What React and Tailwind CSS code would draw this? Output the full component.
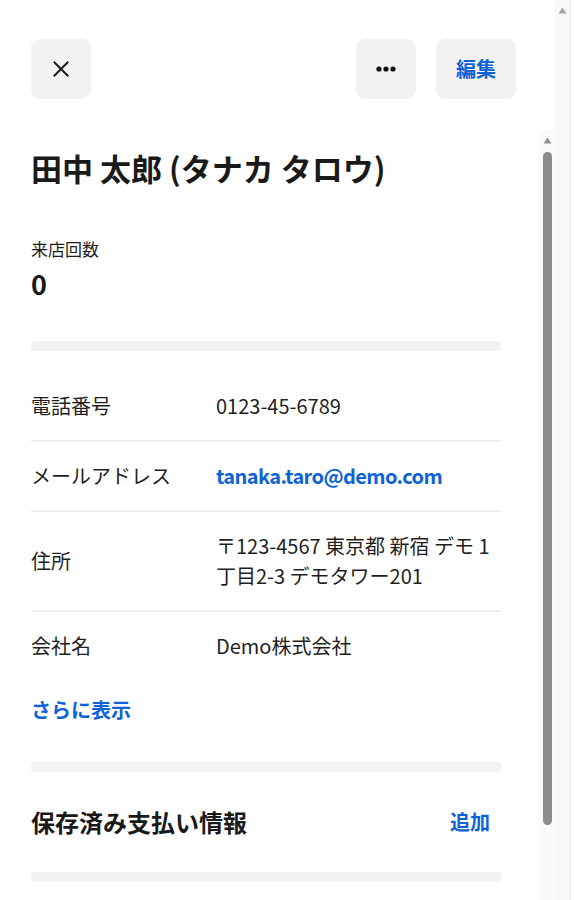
import React from "react";

const FONT = { fontFamily: '"Noto Sans CJK JP", "Noto Sans", sans-serif' };

function Row({ label, children, last }) {
  return (
    <div
      className={
        "flex items-center py-[19px] " +
        (last ? "" : "border-b-2 border-[#f0f0f0]")
      }
    >
      <div className="w-[185px] shrink-0 text-[20px] leading-[30px] text-[#1f1f1f]">
        {label}
      </div>
      <div className="flex-1 text-[20px] leading-[30px] text-[#1f1f1f]">
        {children}
      </div>
    </div>
  );
}

function Arrow({ color }) {
  return (
    <svg width="9" height="7" viewBox="0 0 9 7">
      <path d="M4.5 0.5 L8.5 6.5 L0.5 6.5 Z" fill={color} />
    </svg>
  );
}

export default function App() {
  return (
    <div
      className="flex h-[900px] w-[574px] overflow-hidden bg-white"
      style={FONT}
    >
      <div className="flex w-[555px] flex-col">
        <header className="flex h-[130px] shrink-0 items-start justify-between pl-[31px] pr-[39px] pt-[39px]">
          <button className="flex h-[60px] w-[60px] items-center justify-center rounded-[9px] bg-[#f2f2f2]">
            <svg width="16" height="16" viewBox="0 0 16 16">
              <path
                d="M1.5 1.5 L14.5 14.5 M14.5 1.5 L1.5 14.5"
                stroke="#1a1a1a"
                strokeWidth="2"
                strokeLinecap="square"
              />
            </svg>
          </button>
          <div className="flex gap-[20px]">
            <button className="flex h-[60px] w-[60px] items-center justify-center rounded-[9px] bg-[#f2f2f2]">
              <svg width="20" height="6" viewBox="0 0 20 6">
                <circle cx="3" cy="3" r="2.6" fill="#111" />
                <circle cx="10" cy="3" r="2.6" fill="#111" />
                <circle cx="17" cy="3" r="2.6" fill="#111" />
              </svg>
            </button>
            <button className="flex h-[60px] w-[80px] items-center justify-center rounded-[9px] bg-[#f2f2f2] text-[20px] font-bold text-[#0d63d6]">
              編集
            </button>
          </div>
        </header>

        <div className="flex min-h-0 flex-1">
          <main className="w-[540px] shrink-0 pl-[31px] pr-[39px] pt-[15px]">
            <h1 className="text-[31px] font-bold leading-[45px] text-[#1a1a1a]">
              田中 太郎 (タナカ タロウ)
            </h1>
            <div className="mt-[47px] text-[17px] leading-[24px] text-[#1f1f1f]">
              来店回数
            </div>
            <div className="mt-[7px] text-[27px] font-bold leading-[32px] text-[#1a1a1a]">
              0
            </div>
            <div className="mt-[41px] h-[10px] rounded-[3px] bg-[#f2f2f2]" />

            <div className="pt-[21px]">
              <Row label="電話番号">0123-45-6789</Row>
              <Row label="メールアドレス">
                <span className="font-semibold tracking-[-0.6px] text-[#0d63d6]">
                  tanaka.taro@demo.com
                </span>
              </Row>
              <Row label="住所">
                〒123-4567 東京都 新宿 デモ 1丁目2-3 デモタワー201
              </Row>
              <Row label="会社名" last>
                Demo株式会社
              </Row>
            </div>

            <div className="mt-[15px] text-[20px] font-bold leading-[30px] text-[#0d63d6]">
              さらに表示
            </div>
            <div className="mt-[37px] h-[10px] rounded-[3px] bg-[#f2f2f2]" />

            <div className="flex h-[100px] items-center justify-between">
              <h2 className="text-[24px] font-bold leading-[36px] text-[#1a1a1a]">
                保存済み支払い情報
              </h2>
              <button className="pr-[11px] text-[20px] font-bold leading-[30px] text-[#0d63d6]">
                追加
              </button>
            </div>
            <div className="h-[10px] rounded-[3px] bg-[#f2f2f2]" />
          </main>

          <div className="flex w-[15px] flex-col items-center bg-[#fafafa] pt-[7px]">
            <Arrow color="#8f8f8f" />
            <div className="mt-[8px] h-[673px] w-[9px] rounded-[5px] bg-[#8c8c8c]" />
          </div>
        </div>
      </div>

      <div className="flex w-[15px] flex-col items-center bg-[#f8f8f8] pt-[7px]">
        <Arrow color="#a3a3a3" />
      </div>
      <div className="w-[4px] border-l border-[#e6e6e6] bg-white" />
    </div>
  );
}
